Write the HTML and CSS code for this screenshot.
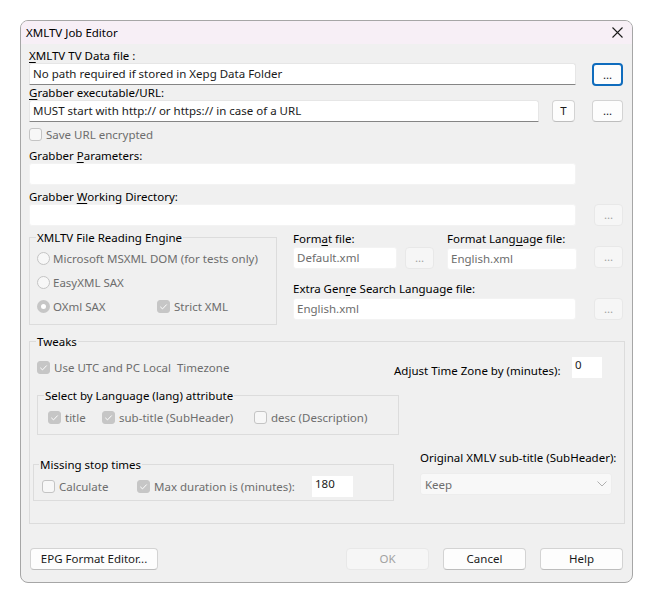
FILE: index.html
```html
<!DOCTYPE html>
<html>
<head>
<meta charset="utf-8">
<link rel="stylesheet" href="styles.css">
</head>
<body>
<div class="window">
  <div class="titlebar">
    <span class="title">XMLTV Job Editor</span>
    <svg class="close" width="11" height="11" viewBox="0 0 11 11"><path d="M0.5 0.5 L10.5 10.5 M10.5 0.5 L0.5 10.5" stroke="#1b1b1b" stroke-width="1.1" fill="none"/></svg>
  </div>
  <div class="content">
    <div class="lbl first"><u>X</u>MLTV TV Data file :</div>
    <div class="row">
      <div class="input line w547">No path required if stored in Xepg Data Folder</div>
      <button class="btn default">...</button>
    </div>
    <div class="lbl"><u>G</u>rabber executable/URL:</div>
    <div class="row">
      <div class="input line w510">MUST start with http:// or https:// in case of a URL</div>
      <button class="btn tbtn">T</button>
      <button class="btn dots">...</button>
    </div>
    <div class="check-line save">
      <span class="cb"></span><span class="dis">Save URL encrypted</span>
    </div>
    <div class="lbl gap6">Grabber <u>P</u>arameters:</div>
    <div class="row">
      <div class="input w547"></div>
    </div>
    <div class="lbl gap5">Grabber <u>W</u>orking Directory:</div>
    <div class="row">
      <div class="input w547"></div>
      <button class="btn disabled dis-dots">...</button>
    </div>

    <div class="middle">
      <fieldset class="group engine">
        <legend>XMLTV File Reading Engine</legend>
        <div class="opt"><span class="radio"></span><span class="dis">Microsoft MSXML DOM (for tests only)</span></div>
        <div class="opt"><span class="radio"></span><span class="dis">EasyXML SAX</span></div>
        <div class="opt last">
          <span class="radio on"></span><span class="dis oxml">OXml SAX</span>
          <span class="cb on"><svg width="13" height="13" viewBox="0 0 13 13"><path d="M3.3 6.8 L5.5 8.9 L9.7 4.5" stroke="#fff" stroke-width="1" fill="none"/></svg></span><span class="dis">Strict XML</span>
        </div>
      </fieldset>
      <div class="files">
        <div class="files-top">
          <div class="fcol">
            <div class="lbl">Form<u>a</u>t file:</div>
            <div class="frow">
              <div class="input dtext w104">Default.xml</div>
              <button class="btn disabled small">...</button>
            </div>
          </div>
          <div class="fcol lang">
            <div class="lbl">Format Lang<u>u</u>age file:</div>
            <div class="frow">
              <div class="input dtext w130">English.xml</div>
            </div>
          </div>
          <button class="btn disabled small far">...</button>
        </div>
        <div class="lbl extra">Extra Gen<u>r</u>e Search Language file:</div>
        <div class="frow between">
          <div class="input dtext w283">English.xml</div>
          <button class="btn disabled small">...</button>
        </div>
      </div>
    </div>

    <fieldset class="group tweaks">
      <legend>Tweaks</legend>
      <div class="tz-row">
        <div class="opt utc"><span class="cb on"><svg width="13" height="13" viewBox="0 0 13 13"><path d="M3.3 6.8 L5.5 8.9 L9.7 4.5" stroke="#fff" stroke-width="1" fill="none"/></svg></span><span class="dis">Use UTC and PC Local&nbsp; Timezone</span></div>
        <span class="tz-label">Adjust Time Zone by (minutes):</span>
        <div class="input small-in w29">0</div>
      </div>
      <fieldset class="group langgrp">
        <legend>Select by Language (lang) attribute</legend>
        <div class="opt">
          <span class="cb on"><svg width="13" height="13" viewBox="0 0 13 13"><path d="M3.3 6.8 L5.5 8.9 L9.7 4.5" stroke="#fff" stroke-width="1" fill="none"/></svg></span><span class="dis t-title">title</span>
          <span class="cb on"><svg width="13" height="13" viewBox="0 0 13 13"><path d="M3.3 6.8 L5.5 8.9 L9.7 4.5" stroke="#fff" stroke-width="1" fill="none"/></svg></span><span class="dis t-sub">sub-title (SubHeader)</span>
          <span class="cb"></span><span class="dis">desc (Description)</span>
        </div>
      </fieldset>
      <div class="bottom-area">
        <fieldset class="group missing">
          <legend>Missing stop times</legend>
          <div class="opt">
            <span class="cb"></span><span class="dis t-calc">Calculate</span>
            <span class="cb on"><svg width="13" height="13" viewBox="0 0 13 13"><path d="M3.3 6.8 L5.5 8.9 L9.7 4.5" stroke="#fff" stroke-width="1" fill="none"/></svg></span><span class="dis t-max">Max duration is (minutes):</span>
            <div class="input small-in w41">180</div>
          </div>
        </fieldset>
        <div class="orig">
          <div class="lbl">Original XMLV sub-title (SubHeader):</div>
          <div class="select">
            <span class="dtext">Keep</span>
            <svg width="10" height="6" viewBox="0 0 10 6"><path d="M0.5 0.5 L5 5 L9.5 0.5" stroke="#b0b0b0" stroke-width="1" fill="none"/></svg>
          </div>
        </div>
      </div>
    </fieldset>

    <div class="buttons">
      <button class="btn wide">EPG Format Editor...</button>
      <span class="spacer"></span>
      <button class="btn disabled ok">OK</button>
      <button class="btn action">Cancel</button>
      <button class="btn action">Help</button>
    </div>
  </div>
</div>
</body>
</html>
```

FILE: styles.css
```css
html, body {
  margin: 0;
  padding: 0;
  background: #ffffff;
}
body {
  font-family: "Segoe UI", "Noto Sans", "Open Sans", sans-serif;
  font-size: 11.5px;
  color: #000;
}
.window {
  box-sizing: border-box;
  width: 613px;
  height: 563px;
  margin: 20px 0 0 20px;
  border: 1px solid #a6a6a6;
  border-radius: 8px;
  background: #f0f0f0;
  overflow: hidden;
}
.titlebar {
  height: 23px;
  background: #f7eff6;
  display: flex;
  align-items: center;
  justify-content: space-between;
  padding: 0 9px 0 5px;
}
.title { line-height: 15px; }
.close { display: block; }

.content {
  padding: 0 9px 0 8px;
}
.lbl {
  height: 15px;
  line-height: 15px;
  white-space: nowrap;
}
.lbl.first { margin-top: 4px; }
.lbl.gap6 { margin-top: 6px; }
.lbl.gap5 { margin-top: 4px; }
u { text-decoration-thickness: 1px; text-underline-offset: 2px; }

.row {
  display: flex;
  align-items: center;
  justify-content: space-between;
  height: 22px;
}
.input {
  box-sizing: border-box;
  height: 22px;
  background: #fff;
  border: 1px solid #f3f3f3;
  border-radius: 3px;
  padding: 0 3px;
  line-height: 20px;
  white-space: nowrap;
  overflow: hidden;
  color: #1a1a1a;
}
.input.line {
  border-color: #e6e6e6;
  border-bottom-color: #858585;
  border-radius: 3px 3px 1px 1px;
}
.w547 { width: 547px; }
.w510 { width: 510px; }
.w104 { width: 104px; }
.w130 { width: 130px; }
.w283 { width: 283px; }
.w29 { width: 30px; }
.w41 { width: 41px; }
.dtext { color: #6d6d6d; }
.dis { color: #6d6d6d; white-space: nowrap; }

.btn {
  box-sizing: border-box;
  font: inherit;
  height: 22px;
  border: 1px solid #d3d3d3;
  border-bottom-color: #bdbdbd;
  border-radius: 4px;
  background: #fdfdfd;
  color: #1a1a1a;
  padding: 0;
  line-height: 18px;
}
.btn.default {
  width: 31px;
  height: 23px;
  border: 2px solid #0f6cbd;
  border-radius: 4px;
  margin-top: 1px;
}
.btn.dots { width: 31px; margin-left: 17px; }
.btn.tbtn { width: 23px; margin-left: 13px; }
.btn.disabled {
  background: #f6f6f6;
  border-color: #e8e8e8;
  color: #a2a2a2;
}
.btn.dis-dots { width: 29px; }

.check-line {
  display: flex;
  align-items: center;
  height: 15px;
}
.check-line.save { margin-top: 5px; }
.cb {
  box-sizing: border-box;
  display: inline-block;
  width: 13px;
  height: 13px;
  border: 1px solid #c4c4c4;
  border-radius: 3px;
  background: #f7f7f7;
  margin-right: 4px;
  flex: none;
}
.cb svg { display: block; margin: -1px; }
.cb.on {
  background: #c6c6c6;
  border-color: #c6c6c6;
}
.radio {
  box-sizing: border-box;
  display: inline-block;
  width: 13px;
  height: 13px;
  border: 1px solid #c4c4c4;
  border-radius: 50%;
  background: #f7f7f7;
  margin-right: 3px;
  flex: none;
}
.radio.on {
  background: #fff;
  border: 4px solid #c6c6c6;
}

.middle {
  display: flex;
  margin-top: 4px;
  align-items: flex-start;
}
.group {
  margin: 0;
  border: 1px solid #dcdcdc;
  min-width: 0;
}
.group legend {
  padding: 0 1px;
  margin-left: -1px;
  line-height: 15px;
  height: 15px;
}
.engine {
  box-sizing: border-box;
  width: 249px;
  height: 95px;
  padding: 6px 6px 0 7px;
}
.opt {
  display: flex;
  align-items: center;
  height: 15px;
}
.engine .opt { margin-bottom: 9px; }
.engine .opt.last { margin-bottom: 0; margin-top: 1px; }
.oxml { width: 104px; }

.files {
  margin-left: 16px;
  padding-top: 1px;
  width: 330px;
}
.files-top {
  display: flex;
  align-items: flex-start;
}
.fcol .lbl { margin-bottom: 1px; }
.frow {
  display: flex;
  align-items: center;
}
.frow.between { justify-content: space-between; }
.fcol.lang { margin-left: 13px; }
.btn.small { width: 29px; height: 22px; }
.fcol .btn.small { margin-left: 8px; margin-top: -1px; }
.btn.far { margin-left: 17px; margin-top: 15px; }
.fcol.lang .input { margin-top: 1px; }
.lbl.extra { margin-top: 11px; margin-bottom: 2px; }

.tweaks {
  box-sizing: border-box;
  width: 596px;
  height: 190px;
  margin-top: 9px;
  padding: 8px 0 0 7px;
}
.tz-row {
  display: flex;
  align-items: center;
  height: 21px;
}
.opt.utc { width: 357px; }
.tz-label { padding-top: 5px; white-space: nowrap; width: 164px; }
.input.small-in {
  height: 21px;
  border: none;
  border-radius: 0;
  line-height: 15px;
  padding: 0 3px;
}
.tz-row .input { margin-left: 14px; }

.langgrp {
  box-sizing: border-box;
  width: 362px;
  height: 47px;
  margin-top: 10px;
  padding: 7px 0 0 10px;
}
.langgrp legend { margin-left: -4px; }
.t-title { width: 37px; }
.t-sub { width: 135px; }

.bottom-area {
  display: flex;
  align-items: flex-start;
  margin-left: -4px;
  margin-top: 15px;
}
.missing {
  box-sizing: border-box;
  width: 361px;
  height: 44px;
  margin-top: 7px;
  padding: 4px 0 0 8px;
}
.missing legend { margin-left: -3px; }
.missing .opt { height: 21px; }
.t-calc { width: 78px; }
.t-max { width: 139px; }
.missing .input { margin-left: 19px; }

.orig { margin-left: 26px; }
.orig .lbl { margin-bottom: 8px; }
.select {
  box-sizing: border-box;
  width: 192px;
  height: 22px;
  background: #f8f8f8;
  border: 1px solid #ededed;
  border-radius: 3px;
  display: flex;
  align-items: center;
  justify-content: space-between;
  padding: 0 4px 0 4px;
}

.buttons {
  display: flex;
  align-items: center;
  margin-top: 24px;
  margin-left: 1px;
}
.spacer { flex: 1; }
.btn.wide { width: 128px; }
.btn.ok { width: 83px; }
.btn.action { width: 83px; margin-left: 14px; }
```
